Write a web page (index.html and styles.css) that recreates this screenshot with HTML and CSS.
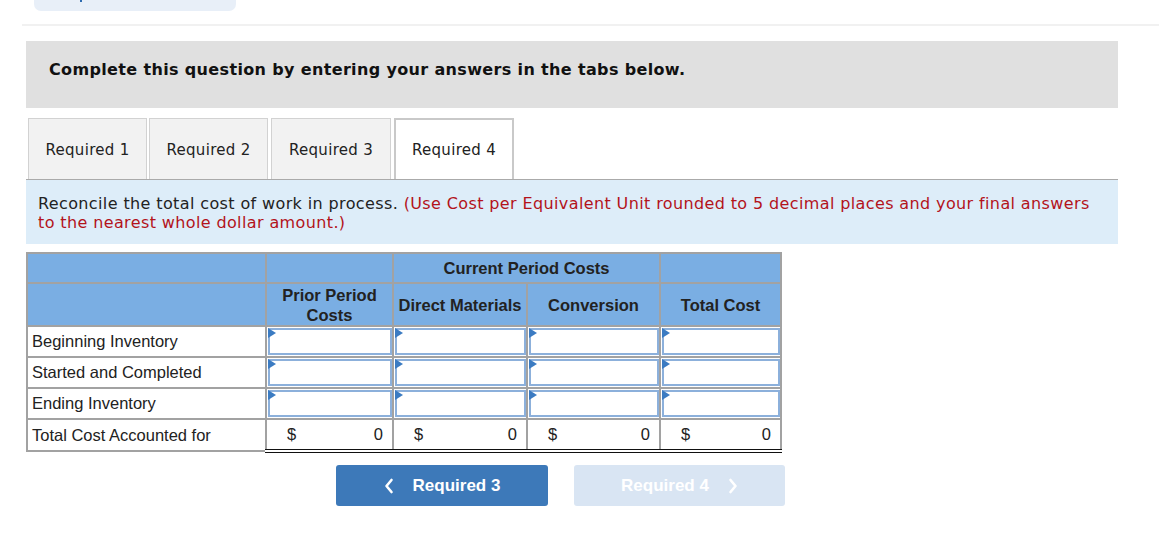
FILE: index.html
```html
<!DOCTYPE html>
<html>
<head>
<meta charset="utf-8">
<link rel="stylesheet" href="styles.css">
</head>
<body>
<div class="topbar"><div class="pill"><span class="pill-mark"></span></div></div>
<div class="divider"></div>
<main class="wrap">
  <div class="banner">Complete this question by entering your answers in the tabs below.</div>
  <div class="tabs">
    <div class="tab">Required 1</div>
    <div class="tab">Required 2</div>
    <div class="tab">Required 3</div>
    <div class="tab active">Required 4</div>
  </div>
  <div class="instr">Reconcile the total cost of work in process. <span class="red">(Use Cost per Equivalent Unit rounded to 5 decimal places and your final answers to the nearest whole dollar amount.)</span></div>
  <table class="grid">
    <colgroup>
      <col class="c1"><col class="c2"><col class="c3"><col class="c4"><col class="c5">
    </colgroup>
    <tr class="h1">
      <th></th><th></th><th colspan="2">Current Period Costs</th><th></th>
    </tr>
    <tr class="h2">
      <th></th><th>Prior Period<br>Costs</th><th>Direct Materials</th><th>Conversion</th><th>Total Cost</th>
    </tr>
    <tr class="row">
      <td class="label">Beginning Inventory</td>
      <td class="in"><div class="box"></div></td><td class="in"><div class="box"></div></td><td class="in"><div class="box"></div></td><td class="in"><div class="box"></div></td>
    </tr>
    <tr class="row">
      <td class="label">Started and Completed</td>
      <td class="in"><div class="box"></div></td><td class="in"><div class="box"></div></td><td class="in"><div class="box"></div></td><td class="in"><div class="box"></div></td>
    </tr>
    <tr class="row">
      <td class="label">Ending Inventory</td>
      <td class="in"><div class="box"></div></td><td class="in"><div class="box"></div></td><td class="in"><div class="box"></div></td><td class="in"><div class="box"></div></td>
    </tr>
    <tr class="row total">
      <td class="label">Total Cost Accounted for</td>
      <td class="sum"><span>$</span><span>0</span></td>
      <td class="sum"><span>$</span><span>0</span></td>
      <td class="sum"><span>$</span><span>0</span></td>
      <td class="sum"><span>$</span><span>0</span></td>
    </tr>
  </table>
  <div class="nav">
    <button class="btn prev"><svg class="chev" viewBox="0 0 10 16" width="10" height="16"><path d="M7.5 2 L2.5 8 L7.5 14" fill="none" stroke="#fff" stroke-width="2.6" stroke-linecap="round" stroke-linejoin="round"/></svg>Required 3</button>
    <button class="btn next">Required 4<svg class="chev" viewBox="0 0 10 16" width="10" height="16"><path d="M2.5 2 L7.5 8 L2.5 14" fill="none" stroke="#fff" stroke-width="2.6" stroke-linecap="round" stroke-linejoin="round"/></svg></button>
  </div>
</main>
</body>
</html>
```
FILE: styles.css
```css
html, body { margin: 0; padding: 0; background: #fff; }
body { font-family: "DejaVu Sans", Verdana, sans-serif; color: #222; }

.topbar { height: 12px; padding-left: 34px; }
.pill { width: 202px; height: 11px; background: #e8eff8; border-radius: 0 0 7px 7px; position: relative; }
.pill-mark { position: absolute; left: 46px; top: 0; width: 2px; height: 2px; background: #2d6bb0; }
.divider { margin: 12px 0 0 22px; height: 2px; background: #f1f1f1; }

.wrap { margin-left: 26px; width: 1092px; padding-top: 15px; }

.banner {
  background: #e0e0e0; height: 67px; box-sizing: border-box;
  padding: 19px 0 0 23px;
  font-weight: bold; font-size: 16px; letter-spacing: 0.35px; line-height: 20px; color: #111;
}

.tabs { display: flex; gap: 2px; margin-top: 10px; padding-left: 2px; height: 61px; }
.tab {
  width: 119px; box-sizing: border-box; height: 61px; padding-top: 2px;
  background: #f2f2f2; border: 1px solid #d2d2d2; border-bottom: none;
  display: flex; align-items: center; justify-content: center;
  font-size: 15px; letter-spacing: 0.3px; color: #222;
}
.tab:nth-child(3) { margin-left: 1px; width: 120px; }
.tab.active { background: #fff; border: 2px solid #c9c9c9; border-bottom: none; margin-left: 1px; width: 120px; padding-top: 1px; }

.instr {
  background: #ddedf9; border-top: 1px solid #aaa; height: 65px; box-sizing: border-box;
  padding: 14px 12px 0 12px; font-size: 16px; letter-spacing: 0.38px; line-height: 19px; color: #222;
}
.red { color: #b3131b; }

.grid {
  margin-top: 8px; border-collapse: collapse; width: 754px; table-layout: fixed;
  font-family: "Liberation Sans", Arial, sans-serif; font-size: 16.5px; color: #222;
}
.c1 { width: 239px; } .c2 { width: 127px; } .c3 { width: 134px; } .c4 { width: 133px; } .c5 { width: 121px; }
.grid th { background: #7aaee3; border: 2px solid #a2a2a2; font-weight: bold; text-align: center; padding: 0; line-height: 20px; }
.h1 th { height: 28px; }
.h2 th { height: 41px; }
.grid td { border: 2px solid #a2a2a2; padding: 0; height: 28px; }
.label { padding-left: 4px !important; }
.in { padding: 1px 0 0 1px !important; vertical-align: top; }
.box {
  position: relative; height: 27px; box-sizing: border-box;
  border: 2px solid #8cb0db; background: #fff;
}
.box::before {
  content: ""; position: absolute; left: -2px; top: -2px;
  border-left: 8px solid #3b7bc2; border-top: 5px solid transparent; border-bottom: 5px solid transparent;
}
.total td { height: 29px; }
.total .sum { border-top: 2px solid #111; border-bottom: 4px double #111; padding: 0 9px 0 20px; }
.sum span:last-child { float: right; }

.nav { display: flex; gap: 26px; margin: 12px 0 0 310px; }
.btn {
  width: 212px; height: 41px; border: none; border-radius: 3px; padding: 0;
  font-family: "Liberation Sans", Arial, sans-serif; font-weight: bold; font-size: 17px; color: #fff;
  display: flex; align-items: center; justify-content: center; gap: 19px;
}
.btn.prev { background: #3d79b9; }
.btn.next { background: #d9e5f3; width: 211px; }
.chev { display: block; }
```
